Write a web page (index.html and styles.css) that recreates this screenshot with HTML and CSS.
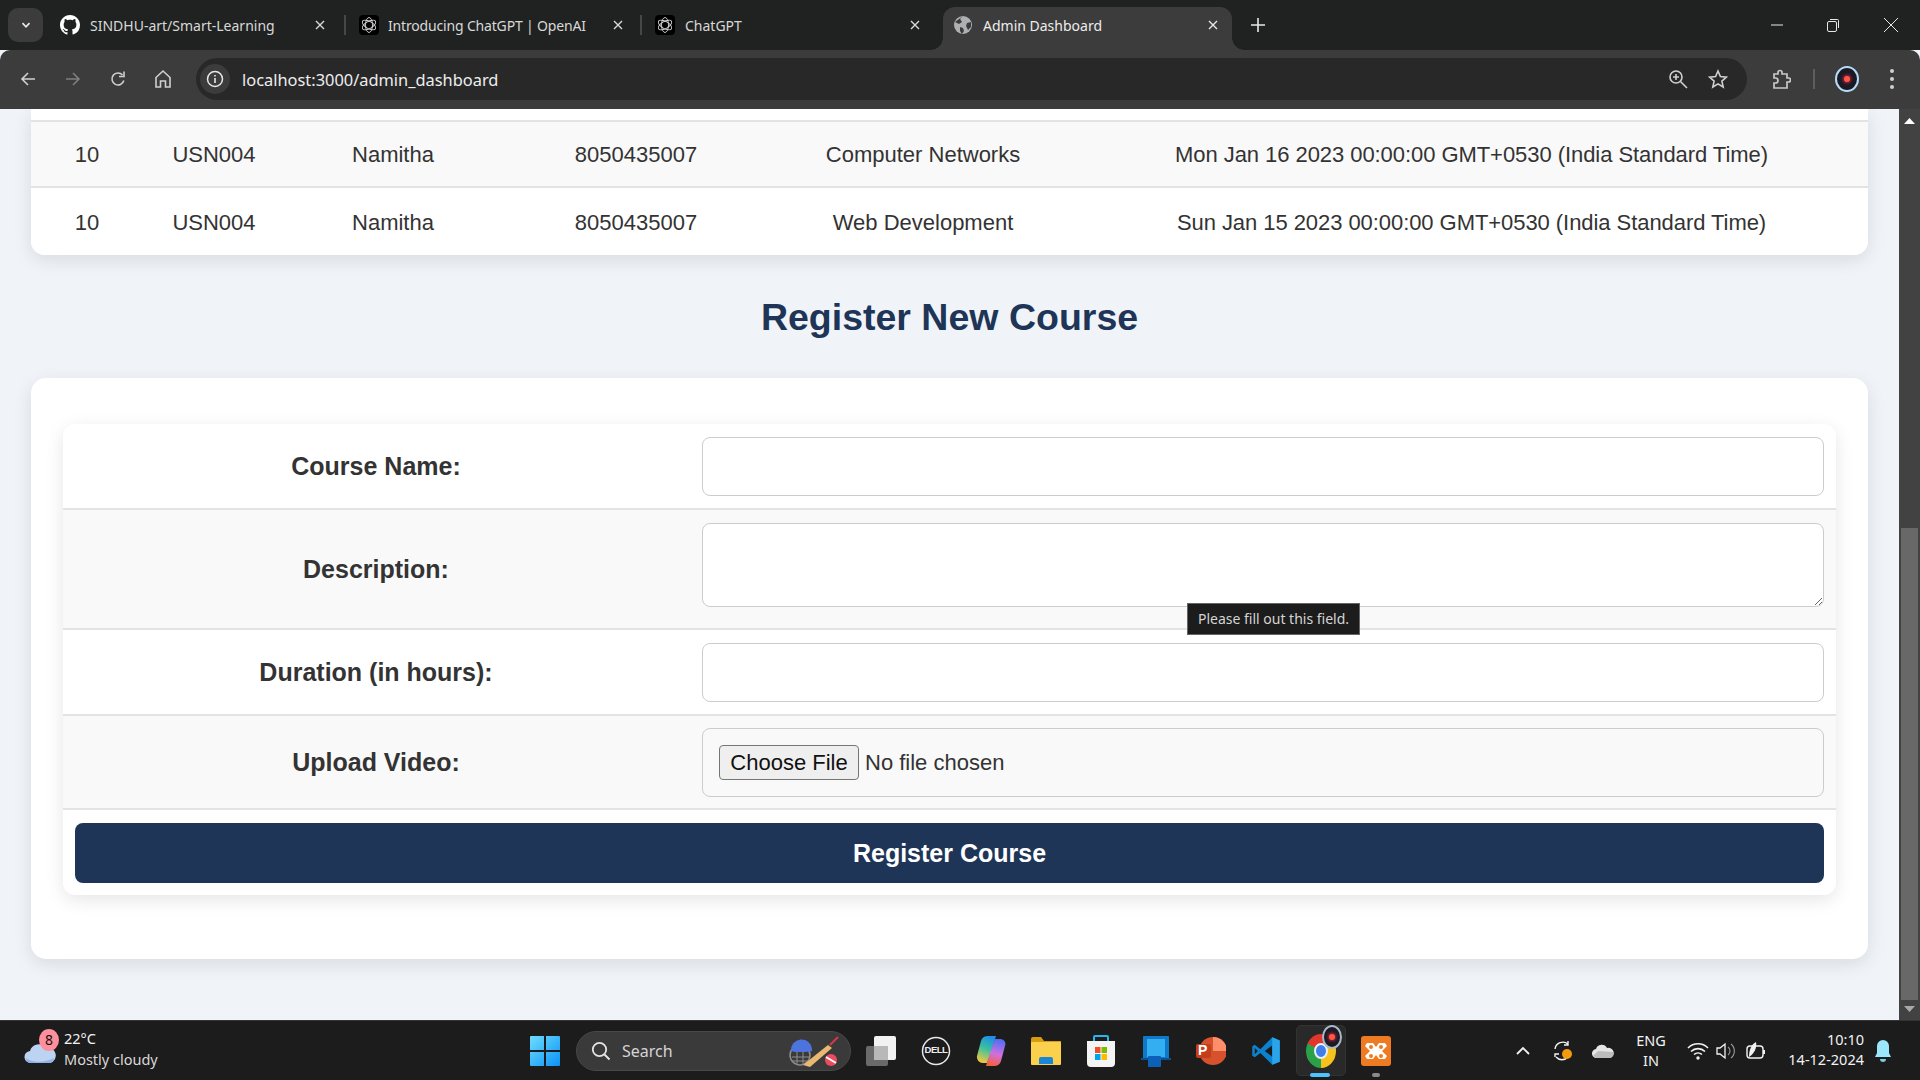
FILE: index.html
```html
<!DOCTYPE html>
<html lang="en">
<head>
<meta charset="utf-8">
<title>Admin Dashboard</title>
<link rel="stylesheet" href="styles.css">
</head>
<body>
<div class="screen">
  <header class="tabstrip">
    <button class="tab-search"><svg width="12" height="12" viewBox="0 0 12 12"><path d="M2.5 4.2 6 7.8l3.5-3.6" fill="none" stroke="#e8e8e8" stroke-width="1.7"/></svg></button>
    <div class="tab tab-one">
      <svg class="favicon" viewBox="0 0 16 16"><path fill="#fff" d="M8 0C3.58 0 0 3.58 0 8c0 3.54 2.29 6.53 5.47 7.59.4.07.55-.17.55-.38 0-.19-.01-.82-.01-1.49-2.01.37-2.53-.49-2.69-.94-.09-.23-.48-.94-.82-1.13-.28-.15-.68-.52-.01-.53.63-.01 1.08.58 1.23.82.72 1.21 1.87.87 2.33.66.07-.52.28-.87.51-1.07-1.78-.2-3.64-.89-3.64-3.95 0-.87.31-1.59.82-2.15-.08-.2-.36-1.02.08-2.12 0 0 .67-.21 2.2.82.64-.18 1.32-.27 2-.27.68 0 1.36.09 2 .27 1.53-1.04 2.2-.82 2.2-.82.44 1.1.16 1.92.08 2.12.51.56.82 1.27.82 2.15 0 3.07-1.87 3.75-3.65 3.95.29.25.54.73.54 1.48 0 1.07-.01 1.93-.01 2.2 0 .21.15.46.55.38A8.013 8.013 0 0016 8c0-4.42-3.58-8-8-8z"/></svg>
      <span class="tab-title">SINDHU-art/Smart-Learning</span>
      <svg class="tab-close" viewBox="0 0 12 12"><path d="M2 2l8 8M10 2l-8 8" stroke="#d8d8d8" stroke-width="1.4"/></svg>
    </div>
    <i class="tab-sep"></i>
    <div class="tab tab-two">
      <svg class="favicon" viewBox="0 0 20 20"><rect width="20" height="20" rx="4" fill="#000"/><g fill="none" stroke="#d8d8d8" stroke-width="0.9"><ellipse cx="10" cy="10" rx="3.500" ry="7.500"/><ellipse cx="10" cy="10" rx="3.500" ry="7.500" transform="rotate(60 10 10)"/><ellipse cx="10" cy="10" rx="3.500" ry="7.500" transform="rotate(120 10 10)"/></g></svg>
      <span class="tab-title tab-title-tight">Introducing ChatGPT | OpenAI</span>
      <svg class="tab-close" viewBox="0 0 12 12"><path d="M2 2l8 8M10 2l-8 8" stroke="#d8d8d8" stroke-width="1.4"/></svg>
    </div>
    <i class="tab-sep"></i>
    <div class="tab tab-three">
      <svg class="favicon" viewBox="0 0 20 20"><rect width="20" height="20" rx="4" fill="#000"/><g fill="none" stroke="#d8d8d8" stroke-width="0.9"><ellipse cx="10" cy="10" rx="3.500" ry="7.500"/><ellipse cx="10" cy="10" rx="3.500" ry="7.500" transform="rotate(60 10 10)"/><ellipse cx="10" cy="10" rx="3.500" ry="7.500" transform="rotate(120 10 10)"/></g></svg>
      <span class="tab-title">ChatGPT</span>
      <svg class="tab-close" viewBox="0 0 12 12"><path d="M2 2l8 8M10 2l-8 8" stroke="#d8d8d8" stroke-width="1.4"/></svg>
    </div>
    <div class="tab tab-active">
      <svg class="favicon favicon-globe" viewBox="0 0 18 18"><circle cx="9" cy="9" r="9" fill="#aeb0b2"/><path d="M9 0 6 3l2 3-3 2-4-2M17 6l-4 1-1 3 2 4 3-3M6 11l3 1 1 3-2 3-2-3z" fill="#3c3c3c"/></svg>
      <span class="tab-title">Admin Dashboard</span>
      <svg class="tab-close" viewBox="0 0 12 12"><path d="M2 2l8 8M10 2l-8 8" stroke="#e8e8e8" stroke-width="1.4"/></svg>
    </div>
    <svg class="tab-new" width="14" height="14" viewBox="0 0 14 14"><path d="M7 0v14M0 7h14" stroke="#e8e8e8" stroke-width="1.6"/></svg>
    <div class="window-controls">
      <span class="win-btn win-btn-min"><svg width="14" height="14" viewBox="0 0 14 14"><path d="M1 7h12" stroke="#e8e8e8"/></svg></span>
      <span class="win-btn"><svg width="14" height="14" viewBox="0 0 14 14"><rect x="1.5" y="3.5" width="9" height="10" rx="1.5" fill="none" stroke="#e8e8e8"/><path d="M4 1.5h7.5a1 1 0 0 1 1 1V10" fill="none" stroke="#e8e8e8"/></svg></span>
      <span class="win-btn"><svg width="14" height="14" viewBox="0 0 14 14"><path d="M0 0l14 14M14 0 0 14" stroke="#e8e8e8"/></svg></span>
    </div>
  </header>

  <nav class="toolbar">
    <span class="nav-btn"><svg width="18" height="18" viewBox="0 0 18 18"><path d="M16 9H3M9 3 3 9l6 6" fill="none" stroke="#d0d0d0" stroke-width="1.6"/></svg></span>
    <span class="nav-btn"><svg width="18" height="18" viewBox="0 0 18 18"><path d="M2 9h13M9 3l6 6-6 6" fill="none" stroke="#7f7f7f" stroke-width="1.6"/></svg></span>
    <span class="nav-btn"><svg width="18" height="18" viewBox="0 0 18 18"><path d="M14.8 10.5A6 6 0 1 1 13.5 5" fill="none" stroke="#d0d0d0" stroke-width="1.6"/><path d="M15 1.5v5h-5" fill="none" stroke="#d0d0d0" stroke-width="1.6"/></svg></span>
    <span class="nav-btn"><svg width="18" height="20" viewBox="0 0 18 20"><path d="M2 8.5 9 2l7 6.500V18h-4.500v-6h-5v6H2z" fill="none" stroke="#d0d0d0" stroke-width="1.6"/></svg></span>
    <div class="omnibox">
      <span class="site-info"><svg width="18" height="18" viewBox="0 0 18 18"><circle cx="9" cy="9" r="7.500" fill="none" stroke="#e8e8e8" stroke-width="1.500"/><path d="M9 8v5M9 5v1.500" stroke="#e8e8e8" stroke-width="1.600"/></svg></span>
      <span class="url">localhost:3000/admin_dashboard</span>
      <svg class="omni-zoom" width="20" height="20" viewBox="0 0 20 20"><circle cx="8" cy="8" r="6" fill="none" stroke="#d0d0d0" stroke-width="1.600"/><path d="M12.500 12.500 19 19M5 8h6M8 5v6" stroke="#d0d0d0" stroke-width="1.600"/></svg>
      <svg class="omni-star" width="20" height="20" viewBox="0 0 20 20"><path d="m10 2 2.400 5.500 6 .6-4.500 4 1.300 5.900-5.200-3.100L4.800 18l1.300-5.900-4.500-4 6-.6z" fill="none" stroke="#d0d0d0" stroke-width="1.600"/></svg>
    </div>
    <span class="tool-ext"><svg width="20" height="20" viewBox="0 0 20 20"><path d="M3 5h4V3.500a2 2 0 0 1 4 0V5h5v4h1.500a2 2 0 0 1 0 4H16v6H3v-5h1.500a2.500 2.500 0 0 0 0-5H3z" fill="none" stroke="#c8c8c8" stroke-width="1.700"/></svg></span>
    <i class="tool-sep"></i>
    <span class="avatar"><i class="avatar-dot"></i></span>
    <span class="tool-menu"><i></i><i></i><i></i></span>
  </nav>

  <div class="viewport">
    <main class="page">
      <section class="table-card">
        <table class="enrol-table">
          <colgroup><col class="c1"><col class="c2"><col class="c3"><col class="c4"><col class="c5"><col class="c6"></colgroup>
          <tr class="row-clipped"><td colspan="6"></td></tr>
          <tr class="row-alt"><td>10</td><td>USN004</td><td>Namitha</td><td>8050435007</td><td>Computer Networks</td><td class="cell-date">Mon Jan 16 2023 00:00:00 GMT+0530 (India Standard Time)</td></tr>
          <tr class="row-plain"><td>10</td><td>USN004</td><td>Namitha</td><td>8050435007</td><td>Web Development</td><td class="cell-date">Sun Jan 15 2023 00:00:00 GMT+0530 (India Standard Time)</td></tr>
        </table>
      </section>

      <h2 class="section-title">Register New Course</h2>

      <section class="form-card">
        <form class="course-form">
          <div class="form-row">
            <label class="form-label">Course Name:</label>
            <div class="form-field"><input class="text-input" type="text"></div>
          </div>
          <div class="form-row form-row-alt">
            <label class="form-label">Description:</label>
            <div class="form-field form-field-area">
              <textarea class="text-area"></textarea>
              <div class="tooltip">Please fill out this field.</div>
            </div>
          </div>
          <div class="form-row">
            <label class="form-label">Duration (in hours):</label>
            <div class="form-field"><input class="text-input" type="text"></div>
          </div>
          <div class="form-row form-row-alt">
            <label class="form-label">Upload Video:</label>
            <div class="form-field form-field-file"><input class="file-input" type="file"></div>
          </div>
          <div class="form-submit"><button class="submit-btn" type="button">Register Course</button></div>
        </form>
      </section>
    </main>
    <aside class="scrollbar">
      <svg class="scroll-arrow" width="11" height="6" viewBox="0 0 11 6"><path d="M5.500 0 11 6H0z" fill="#fff"/></svg>
      <div class="scroll-thumb"></div>
      <svg class="scroll-arrow" width="11" height="6" viewBox="0 0 11 6"><path d="M5.500 6 11 0H0z" fill="#a8a8a8"/></svg>
    </aside>
  </div>

  <footer class="taskbar">
    <div class="weather">
      <span class="weather-icon">
        <svg width="32" height="26" viewBox="0 0 32 26"><rect x="19" y="2" width="7" height="8" fill="#f08a1c"/><path d="M7 24a6 6 0 0 1-1-12 9 9 0 0 1 16-3 7 7 0 0 1 4 15z" fill="#bcd3f2"/><path d="M2 19c6 5 18 5 28 0-1 4-3 5-5 5H7c-3 0-5-2-5-5z" fill="#8fb3e6"/></svg>
        <b class="weather-badge">8</b>
      </span>
      <span class="weather-text"><span class="temp">22°C</span><span class="sky">Mostly cloudy</span></span>
    </div>
    <svg class="start" width="30" height="30" viewBox="0 0 30 30"><defs><linearGradient id="winblue" x1="0" y1="0" x2="1" y2="1"><stop offset="0" stop-color="#6fdcff"/><stop offset="1" stop-color="#0a93f5"/></linearGradient></defs><path fill="url(#winblue)" d="M0 1a1 1 0 0 1 1-1h13v14H0zM16 0h13a1 1 0 0 1 1 1v13H16zM0 16h14v14H1a1 1 0 0 1-1-1zM16 16h14v13a1 1 0 0 1-1 1H16z"/></svg>
    <div class="search-pill">
      <svg width="20" height="20" viewBox="0 0 20 20"><circle cx="8.500" cy="8.500" r="6.700" fill="none" stroke="#e4e4e4" stroke-width="1.800"/><path d="m13.500 13.500 5 5" stroke="#e4e4e4" stroke-width="1.900"/></svg>
      <span class="search-text">Search</span>
      <svg class="search-art" width="50" height="32" viewBox="0 0 50 32"><circle cx="11" cy="20" r="10" fill="#3a3a3a" stroke="#8e8e8e" stroke-width="1.500"/><path d="M3 22h17M3 26h15M8 15v15M14 15v15" stroke="#8e8e8e"/><path d="M2 16a10.500 10.500 0 0 1 21-2v2l-6 1H6z" fill="#4d73df"/><path d="m14 30 25-20 4 3-22 19z" fill="#e9b872"/><path d="m41 10 8-8" stroke="#d8384a" stroke-width="2"/><circle cx="42" cy="25" r="6" fill="#ef4b5f"/><path d="m37 22 10 6" stroke="#fff" stroke-width="2"/></svg>
    </div>
    <div class="task-icons">
      <span class="task-slot"><svg width="30" height="30" viewBox="0 0 30 30"><rect x="0" y="10" width="22" height="20" rx="2" fill="#6a6a6a"/><rect x="8" y="0" width="22" height="24" rx="2" fill="#f2f2f2"/><rect x="8" y="10" width="14" height="14" fill="#b8b8b8"/></svg></span>
      <span class="task-slot"><svg width="30" height="30" viewBox="0 0 30 30"><circle cx="15" cy="15" r="13.500" fill="none" stroke="#e8e8e8" stroke-width="1.500"/></svg><em class="dell">DELL</em></span>
      <span class="task-slot"><svg width="30" height="32" viewBox="0 0 30 32"><defs><linearGradient id="cop1" x1="0.600" y1="0" x2="0.300" y2="1"><stop offset="0" stop-color="#1f8fe8"/><stop offset=".45" stop-color="#38c0a0"/><stop offset="1" stop-color="#f6c93c"/></linearGradient><linearGradient id="cop2" x1="0.600" y1="0" x2="0.400" y2="1"><stop offset="0" stop-color="#4f6ef5"/><stop offset=".55" stop-color="#d070e0"/><stop offset="1" stop-color="#f5603a"/></linearGradient></defs><path d="M11 1h9l-6 19-3 8H7a6 6 0 0 1-6-7l4-15a7 7 0 0 1 6-5z" fill="url(#cop1)"/><path d="M19 31h-9l6-19 3-8h5a5 5 0 0 1 5 7l-4 15a7 7 0 0 1-6 5z" fill="url(#cop2)"/></svg></span>
      <span class="task-slot"><svg width="30" height="28" viewBox="0 0 30 28"><path d="M0 2a2 2 0 0 1 2-2h8l3 4h17v6H0z" fill="#d89c10"/><rect y="5" width="30" height="23" rx="1" fill="#fbd04c"/><path d="M8 27v-5a2 2 0 0 1 2-2h10a2 2 0 0 1 2 2v5z" fill="#1b86d6"/></svg></span>
      <span class="task-slot"><svg width="30" height="34" viewBox="0 0 30 34"><path d="M8 8V3a1 1 0 0 1 1-1h12a1 1 0 0 1 1 1v5" fill="none" stroke="#28b4ec" stroke-width="2"/><path d="M1 7h28v22a4 4 0 0 1-4 4H5a4 4 0 0 1-4-4z" fill="#f4f4f4"/><rect x="9" y="13" width="5.500" height="6" fill="#f25022"/><rect x="15.500" y="13" width="5.500" height="6" fill="#7fba00"/><rect x="9" y="20" width="5.500" height="6" fill="#00a4ef"/><rect x="15.500" y="20" width="5.500" height="6" fill="#ffb900"/></svg></span>
      <span class="task-slot"><svg width="30" height="32" viewBox="0 0 30 32"><rect x="2" y="1" width="26" height="24" rx="1" fill="#0f78c8"/><rect x="6" y="4" width="18" height="18" fill="#33aef0"/><rect x="0" y="23" width="30" height="2" fill="#0a4f90"/><rect x="7" y="21" width="13" height="11" rx="1" fill="#0c60b8"/></svg></span>
      <span class="task-slot"><svg width="30" height="30" viewBox="0 0 30 30"><circle cx="17" cy="15" r="14" fill="#d5522c"/><path d="M17 1a14 14 0 0 1 14 14H17z" fill="#ff8f6b"/><rect x="0" y="8" width="15" height="14" rx="2" fill="#c43e1c"/></svg><em class="ppt-p">P</em></span>
      <span class="task-slot"><svg width="30" height="32" viewBox="0 0 24 24"><path fill-rule="evenodd" fill="#0a82d0" d="M17 1 7.500 10.500 3 7 1 8.200v7.600L3 17l4.500-3.500L17 23l6-2.500v-17zM17 7.500v9L11 12zM3 9.500 5.500 12 3 14.500z"/><path d="M17 1l6 2.500v17L17 23z" fill="#2ba5ea"/></svg></span>
      <span class="task-slot task-slot-active"><span class="chrome-icon"><i class="chrome-core"></i></span><span class="chrome-badge"><i class="avatar-dot"></i></span><i class="task-bar task-bar-on"></i></span>
      <span class="task-slot"><svg width="30" height="30" viewBox="0 0 30 30"><rect width="30" height="30" rx="3" fill="#ee7a22"/><path d="M6 7h6l3 4 3-4h6l2 3-5 5 5 5-2 3h-6l-3-4-3 4H6l-2-3 5-5-5-5z" fill="#fff"/><circle cx="10" cy="11" r="2" fill="#ee7a22"/><circle cx="20" cy="11" r="2" fill="#ee7a22"/><circle cx="10" cy="20" r="2" fill="#ee7a22"/><circle cx="20" cy="20" r="2" fill="#ee7a22"/></svg><i class="task-bar"></i></span>
    </div>
    <div class="tray">
      <div class="tray-group">
        <span class="tray-icon"><svg width="14" height="9" viewBox="0 0 14 9"><path d="m1 8 6-6 6 6" fill="none" stroke="#f2f2f2" stroke-width="1.800"/></svg></span>
        <span class="tray-icon"><svg width="22" height="22" viewBox="0 0 22 22"><path d="M3 9a8 8 0 0 1 13-5M16 1v4h-4M3 17v-3h4M16 17a8 8 0 0 1-12 0" fill="none" stroke="#f2f2f2" stroke-width="1.400"/><circle cx="15" cy="14" r="5" fill="#f59a0c"/></svg></span>
        <span class="tray-icon"><svg width="22" height="14" viewBox="0 0 22 14"><path d="M5 14a4.500 4.500 0 0 1-1-9 6 6 0 0 1 11-1 5 5 0 0 1 3 10z" fill="#e6e6e6"/><path d="M6 7 1 12l3 2h14a4 4 0 0 0 3-6z" fill="#bdbdbd"/></svg></span>
      </div>
      <div class="lang"><span>ENG</span><span>IN</span></div>
      <div class="tray-group tray-status">
        <span class="tray-icon"><svg width="22" height="18" viewBox="0 0 22 18"><path d="M1 6a14 14 0 0 1 20 0M4 9.500a10 10 0 0 1 14 0M7 12.500a6 6 0 0 1 8 0" fill="none" stroke="#f2f2f2" stroke-width="1.600"/><circle cx="11" cy="16" r="1.700" fill="#f2f2f2"/></svg></span>
        <span class="tray-icon"><svg width="22" height="20" viewBox="0 0 22 20"><path d="M1 7v6h3l5 4V3L4 7z" fill="none" stroke="#f2f2f2" stroke-width="1.300"/><path d="M12 6a5 5 0 0 1 0 8M15 3a9 9 0 0 1 0 14" fill="none" stroke="#9a9a9a" stroke-width="1.100"/></svg></span>
        <span class="tray-icon"><svg width="22" height="22" viewBox="0 0 22 22"><rect x="2" y="6" width="16" height="12" rx="3" fill="none" stroke="#f2f2f2" stroke-width="1.400"/><rect x="18" y="10" width="2" height="4" fill="#f2f2f2"/><path d="M4 17c0-8 3-13 7-15 1 5-1 11-7 15z" fill="#f2f2f2"/></svg></span>
      </div>
      <div class="clock"><span>10:10</span><span>14-12-2024</span></div>
      <svg class="bell" width="18" height="24" viewBox="0 0 18 24"><path d="M9 1a6 6 0 0 1 6 6v7l2 4H1l2-4V7a6 6 0 0 1 6-6z" fill="#9be6fb"/><path d="M6 20h6a3 3 0 0 1-6 0z" fill="#78cce6"/></svg>
    </div>
  </footer>
</div>
</body>
</html>
```
FILE: styles.css
```css
* { box-sizing: border-box; }
html, body { margin: 0; height: 100%; overflow: hidden; }
body { font-family: "Liberation Sans", Arial, sans-serif; }
.screen { width: 1920px; height: 1080px; display: flex; flex-direction: column; background: #f0f4f8; }

/* browser chrome */
.tabstrip { height: 50px; flex: none; background: #202221; display: flex; align-items: flex-end; font-family: "Noto Sans", sans-serif; color: #d8d8d8; font-size: 14px; position: relative; }
.tab-search { width: 35px; height: 34px; margin: 0 5px 8px 8px; padding: 0; border: 0; border-radius: 10px; background: #3c3c3c; display: flex; align-items: center; justify-content: center; }
.tab { height: 43px; display: flex; align-items: center; padding-bottom: 7px; padding-left: 12px; }
.favicon { width: 20px; height: 20px; flex: none; margin-right: 10px; }
.favicon-globe { width: 18px; height: 18px; margin-right: 11px; }
.tab-title { flex: 1; white-space: nowrap; overflow: hidden; }
.tab-title-tight { letter-spacing: -.17px; margin-left: -1px; }
.tab-close { width: 12px; height: 12px; flex: none; }
.tab-one { width: 296px; padding-right: 18px; }
.tab-two { width: 293px; padding-right: 16px; }
.tab-three { width: 300px; padding-right: 22px; }
.tab-active { width: 289px; padding-left: 11px; padding-right: 13px; background: #3c3c3c; border-radius: 12px 12px 0 0; color: #ececec; position: relative; }
.tab-active::before, .tab-active::after { content: ""; position: absolute; bottom: 0; width: 12px; height: 12px; }
.tab-active::before { left: -12px; background: radial-gradient(circle at 0 0, #202221 11.500px, #3c3c3c 12px); }
.tab-active::after { right: -12px; background: radial-gradient(circle at 100% 0, #202221 11.500px, #3c3c3c 12px); }
.tab-sep { width: 2px; height: 20px; margin-bottom: 15px; background: #474747; flex: none; margin-right: 1px; }
.tab-new { margin: 0 0 18px 19px; flex: none; }
.window-controls { margin-left: auto; display: flex; align-self: stretch; }
.win-btn { width: 58px; display: flex; align-items: center; justify-content: center; }
.win-btn-min { width: 54px; }

.toolbar { height: 59px; flex: none; background: #3c3c3c; border-radius: 10px 10px 0 0; display: flex; align-items: center; padding-left: 5px; padding-bottom: 1px; }
.nav-btn { width: 45px; display: flex; justify-content: center; }
.omnibox { width: 1551px; height: 42px; margin-left: 11px; padding-left: 4px; border-radius: 21px; background: #282828; display: flex; align-items: center; }
.site-info { width: 30px; height: 30px; border-radius: 50%; background: #3c3c3c; display: flex; align-items: center; justify-content: center; flex: none; }
.url { margin-left: 12px; font: 16.400px "Noto Sans", sans-serif; color: #eee; flex: 1; }
.omni-zoom { margin-right: 20px; }
.omni-star { margin-right: 19px; }
.tool-ext { width: 34px; margin-left: 17px; display: flex; justify-content: center; }
.tool-sep { width: 2px; height: 20px; margin-left: 15px; background: #5e5e5e; }
.avatar { width: 24px; height: 26px; margin-left: 20px; border-radius: 50%; background: #1a1a24; border: 2.500px solid #b5dcf7; display: flex; align-items: center; justify-content: center; }
.avatar-dot { width: 6px; height: 6px; border-radius: 50%; background: #ff5a3c; box-shadow: 0 0 3px 1px #c0204a; display: block; }
.tool-menu { margin-left: 31px; display: flex; flex-direction: column; gap: 4px; }
.tool-menu i { width: 4px; height: 4px; border-radius: 50%; background: #d0d0d0; display: block; }

/* page */
.viewport { flex: 1; min-height: 0; display: flex; }
.page { flex: 1; min-width: 0; padding: 0 31px; overflow: hidden; color: #333; }
.scrollbar { width: 21px; flex: none; background: #424242; display: flex; flex-direction: column; align-items: center; padding: 9px 0 8px; }
.scroll-arrow { flex: none; }
.scroll-thumb { width: 17px; height: 472px; margin-top: auto; margin-bottom: 6px; background: #686868; }

.table-card { background: #fff; border-radius: 0 0 14px 14px; box-shadow: 0 5px 18px rgba(0, 0, 0, .1); overflow: hidden; }
.enrol-table { width: 100%; table-layout: fixed; border-collapse: collapse; font-size: 22px; text-align: center; }
.c1 { width: 112px; } .c2 { width: 142px; } .c3 { width: 216px; } .c4 { width: 270px; } .c5 { width: 304px; }
.enrol-table td { padding: 2px 0 0; white-space: nowrap; }
.enrol-table .cell-date { letter-spacing: -.06px; }
.row-clipped td { height: 12px; padding: 0; background: #fff; border-bottom: 2px solid #e3e3e3; }
.row-alt td { height: 66px; background: #f9f9f9; border-bottom: 2px solid #e3e3e3; }
.row-plain td { height: 68px; background: #fff; }

.section-title { margin: 39px 0 37px; font-size: 37.500px; line-height: 47px; font-weight: 700; text-align: center; color: #1e3557; }

.form-card { height: 581px; padding: 46px 32px 0; background: #fff; border-radius: 15px; box-shadow: 0 5px 18px rgba(0, 0, 0, .1); }
.course-form { background: #fff; border-radius: 12px; box-shadow: 0 5px 18px rgba(0, 0, 0, .1); }
.form-row { display: grid; grid-template-columns: 626px 1fr; align-items: center; border-bottom: 2px solid #e3e3e3; }
.form-row-alt { background: #f9f9f9; }
.form-label { font-size: 25px; font-weight: 700; text-align: center; color: #333; }
.form-field { padding: 13px 12px 12px 13px; position: relative; }
.form-field-area { padding-bottom: 21px; }
.form-field-file { padding-top: 12px; padding-bottom: 11px; }
.text-input, .text-area, .file-input { display: block; width: 100%; border: 1.500px solid #ccc; border-radius: 8px; background: #fff; font: 22px "Liberation Sans", Arial, sans-serif; margin: 0; }
.text-input { height: 59px; }
.text-area { height: 84px; resize: vertical; }
.file-input { height: 69px; padding: 16px 16px; background: #f9f9f9; color: #333; }
.file-input::file-selector-button { width: 140px; height: 35px; margin: 0 6px 0 0; padding: 0; border: 1px solid #767676; border-radius: 4px; background: #efefef; color: #111; font: 22px "Liberation Sans", Arial, sans-serif; }
.form-submit { padding: 13px 12px 12px 12px; }
.submit-btn { display: block; width: 100%; height: 60px; border: 0; border-radius: 8px; background: #1e3557; color: #fff; font: 700 25px "Liberation Sans", Arial, sans-serif; }
.tooltip { position: absolute; left: 498px; top: 93px; width: 173px; height: 32px; background: #1c1c1c; border: 1px solid #666; color: #d4d4d4; font: 14px/30px "Noto Sans", sans-serif; text-align: center; white-space: nowrap; }

/* taskbar */
.taskbar { height: 60px; flex: none; background: #1c1c1c; border-top: 1px solid #333; display: flex; align-items: center; padding-left: 24px; color: #f2f2f2; font: 14.500px "Noto Sans", sans-serif; }
.weather { width: 506px; display: flex; align-items: center; flex: none; }
.weather-icon { width: 40px; height: 48px; padding-bottom: 10px; position: relative; display: flex; align-items: flex-end; flex: none; }
.weather-badge { position: absolute; left: 15px; top: 2px; width: 20px; height: 22px; border-radius: 50%; background: #ff8f9c; color: #111; font: 400 14px/22px "Noto Sans", sans-serif; text-align: center; }
.weather-text { display: flex; flex-direction: column; line-height: 21px; padding-bottom: 4px; }
.sky { color: #d8d8d8; }
.start { flex: none; }
.search-pill { width: 275px; height: 40px; margin-left: 16px; padding-left: 14px; border-radius: 20px; background: #3a3a3a; border: 1px solid #484848; display: flex; align-items: center; flex: none; }
.search-text { margin-left: 11px; font-size: 16px; color: #d4d4d4; flex: 1; }
.search-art { margin-right: 11px; }
.task-icons { display: flex; gap: 19px; margin-left: 12px; flex: none; }
.task-slot { width: 36px; height: 59px; display: flex; align-items: center; justify-content: center; position: relative; }
.task-slot-active::before { content: ""; position: absolute; left: -7px; right: -7px; top: 4px; bottom: 4px; border-radius: 5px; background: #292929; border: 1px solid #333; }
.dell { position: absolute; left: 0; right: 0; top: 23px; text-align: center; font: 700 9.500px/12px "Liberation Sans", sans-serif; color: #eee; letter-spacing: -.5px; }
.ppt-p { position: absolute; left: 5px; top: 20px; font: 700 14px/18px "Liberation Sans", sans-serif; color: #fff; }
.chrome-icon { width: 30px; height: 34px; border-radius: 50%; background: conic-gradient(from -60deg, #e0362c 0 120deg, #f8c21c 120deg 240deg, #2aa148 240deg 360deg); display: flex; align-items: center; justify-content: center; position: relative; }
.chrome-core { width: 14px; height: 16px; border-radius: 50%; background: #3f7fea; border: 2px solid #e8f0fe; }
.chrome-badge { position: absolute; right: -3px; top: 4px; width: 20px; height: 24px; border-radius: 50%; background: #1a1a24; border: 2.500px solid #a8b8c8; display: flex; align-items: center; justify-content: center; }
.task-bar { position: absolute; left: 14px; bottom: 3px; width: 8px; height: 4px; border-radius: 2px; background: #8a8a8a; }
.task-bar-on { left: 7px; width: 20px; background: #4cc2ff; }
.tray { display: flex; align-items: center; margin-left: 117px; flex: none; }
.tray-group { display: flex; gap: 16px; }
.tray-status { gap: 5px; margin-left: 13px; }
.tray-icon { width: 24px; display: flex; align-items: center; justify-content: center; }
.lang { width: 44px; margin-left: 14px; display: flex; flex-direction: column; align-items: center; line-height: 20px; padding-bottom: 2px; }
.clock { width: 90px; margin-left: 6px; display: flex; flex-direction: column; align-items: flex-end; line-height: 20px; padding-bottom: 4px; }
.bell { margin-left: 10px; }
```
